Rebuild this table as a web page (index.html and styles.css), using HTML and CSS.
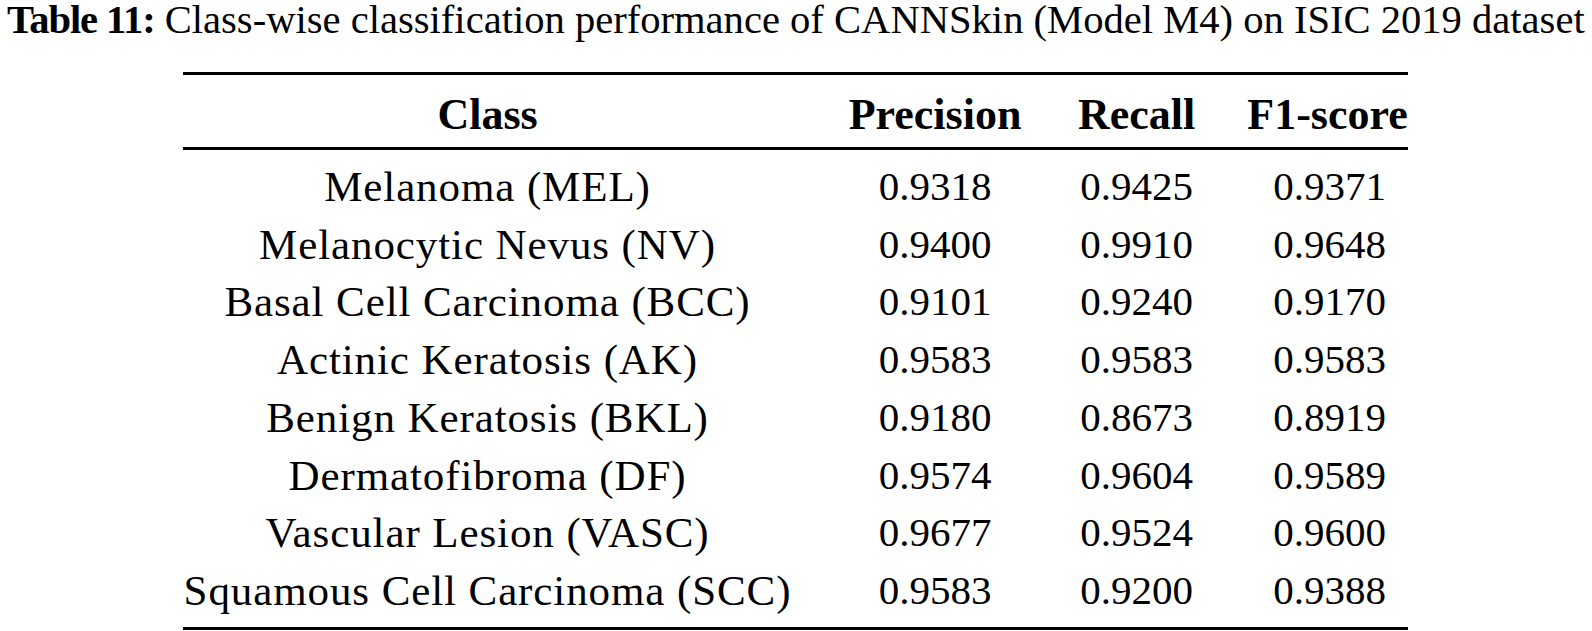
FILE: index.html
```html
<!DOCTYPE html>
<html lang="en">
<head>
<meta charset="utf-8">
<title>Table 11</title>
<link rel="stylesheet" href="styles.css">
</head>
<body>
<div class="page">
  <p class="caption"><span class="label">Table 11:</span> Class-wise classification performance of CANNSkin (Model M4) on ISIC 2019 dataset</p>
  <table class="results">
    <colgroup>
      <col class="c-class">
      <col class="c-prec">
      <col class="c-rec">
      <col class="c-f1">
    </colgroup>
    <thead>
      <tr><th>Class</th><th>Precision</th><th>Recall</th><th>F1-score</th></tr>
    </thead>
    <tbody>
      <tr><td class="name">Melanoma (MEL)</td><td>0.9318</td><td>0.9425</td><td>0.9371</td></tr>
      <tr><td class="name">Melanocytic Nevus (NV)</td><td>0.9400</td><td>0.9910</td><td>0.9648</td></tr>
      <tr><td class="name">Basal Cell Carcinoma (BCC)</td><td>0.9101</td><td>0.9240</td><td>0.9170</td></tr>
      <tr><td class="name">Actinic Keratosis (AK)</td><td>0.9583</td><td>0.9583</td><td>0.9583</td></tr>
      <tr><td class="name">Benign Keratosis (BKL)</td><td>0.9180</td><td>0.8673</td><td>0.8919</td></tr>
      <tr><td class="name">Dermatofibroma (DF)</td><td>0.9574</td><td>0.9604</td><td>0.9589</td></tr>
      <tr><td class="name">Vascular Lesion (VASC)</td><td>0.9677</td><td>0.9524</td><td>0.9600</td></tr>
      <tr><td class="name">Squamous Cell Carcinoma (SCC)</td><td>0.9583</td><td>0.9200</td><td>0.9388</td></tr>
    </tbody>
  </table>
</div>
</body>
</html>
```

FILE: styles.css
```css
html, body {
  margin: 0;
  padding: 0;
  background: #ffffff;
}

body {
  font-family: "Liberation Serif", "Times New Roman", serif;
  color: #000000;
}

.page {
  padding: 0 0 0 7px;
}

.caption {
  margin: 0;
  font-size: 40.6px;
  line-height: 40px;
  white-space: nowrap;
}

.caption .label {
  font-weight: bold;
  letter-spacing: -1.1px;
  margin-right: 0;
}

.results {
  margin: 32px 0 0 176px;
  border-collapse: collapse;
  table-layout: fixed;
  width: 1225px;
  border-top: 3px solid #000;
  border-bottom: 3px solid #000;
}

.c-class { width: 637px; }
.c-prec { width: 230px; }
.c-rec { width: 173px; }
.c-f1 { width: 185px; }

.results th,
.results td {
  text-align: center;
  padding: 0 28px;
  white-space: nowrap;
}

.results th:first-child,
.results td:first-child {
  padding-left: 0;
  padding-right: 28px;
}

.results th:last-child,
.results td:last-child {
  padding-right: 0;
}

.results th {
  font-size: 44px;
  font-weight: bold;
  line-height: 50px;
  padding-top: 15px;
  padding-bottom: 7px;
  border-bottom: 3px solid #000;
}

.results th:last-child {
  padding-left: 24px;
  padding-right: 0;
}

.results td {
  font-size: 41px;
  line-height: 57.7px;
}

.results td.name {
  font-size: 43px;
  letter-spacing: 0.9px;
}

.results tbody tr:first-child td {
  padding-top: 8px;
}

.results tbody tr:last-child td {
  padding-bottom: 7px;
}
```
